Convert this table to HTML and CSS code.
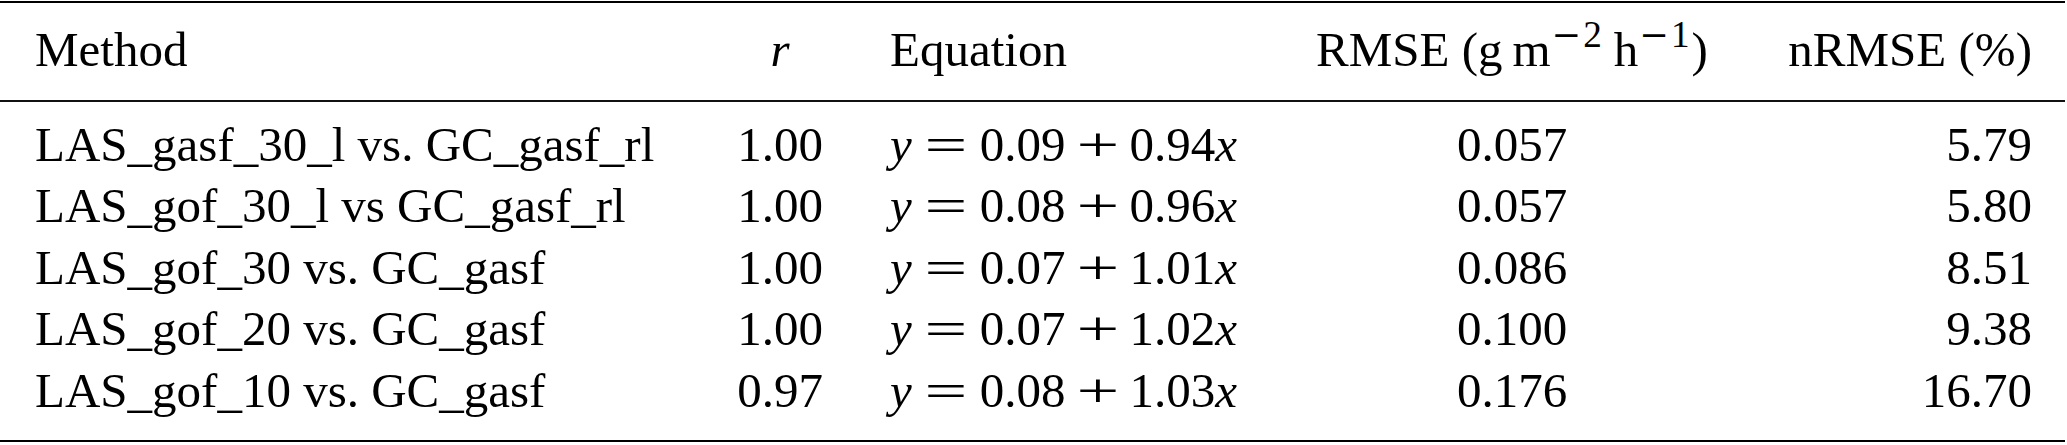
FILE: index.html
```html
<!DOCTYPE html>
<html lang="en">
<head>
<meta charset="utf-8">
<title>Method comparison</title>
<link rel="stylesheet" href="styles.css">
</head>
<body>
<table class="results">
  <colgroup>
    <col class="c-method">
    <col class="c-r">
    <col class="c-eq">
    <col class="c-rmse">
    <col class="c-nrmse">
  </colgroup>
  <thead>
    <tr>
      <th class="method">Method</th>
      <th class="r"><i>r</i></th>
      <th class="eq">Equation</th>
      <th class="rmse">RMSE (g&#8201;m<sup><span class="mn">−</span>2</sup>&#8201;h<sup><span class="mn">−</span>1</sup>)</th>
      <th class="nrmse">nRMSE (%)</th>
    </tr>
  </thead>
  <tbody>
    <tr>
      <td class="method">LAS_gasf_30_l vs. GC_gasf_rl</td>
      <td class="r">1.00</td>
      <td class="eq"><i>y</i><span class="op rel">=</span>0.09<span class="op bin">+</span>0.94<i>x</i></td>
      <td class="rmse">0.057</td>
      <td class="nrmse">5.79</td>
    </tr>
    <tr>
      <td class="method">LAS_gof_30_l vs GC_gasf_rl</td>
      <td class="r">1.00</td>
      <td class="eq"><i>y</i><span class="op rel">=</span>0.08<span class="op bin">+</span>0.96<i>x</i></td>
      <td class="rmse">0.057</td>
      <td class="nrmse">5.80</td>
    </tr>
    <tr>
      <td class="method">LAS_gof_30 vs. GC_gasf</td>
      <td class="r">1.00</td>
      <td class="eq"><i>y</i><span class="op rel">=</span>0.07<span class="op bin">+</span>1.01<i>x</i></td>
      <td class="rmse">0.086</td>
      <td class="nrmse">8.51</td>
    </tr>
    <tr>
      <td class="method">LAS_gof_20 vs. GC_gasf</td>
      <td class="r">1.00</td>
      <td class="eq"><i>y</i><span class="op rel">=</span>0.07<span class="op bin">+</span>1.02<i>x</i></td>
      <td class="rmse">0.100</td>
      <td class="nrmse">9.38</td>
    </tr>
    <tr>
      <td class="method">LAS_gof_10 vs. GC_gasf</td>
      <td class="r">0.97</td>
      <td class="eq"><i>y</i><span class="op rel">=</span>0.08<span class="op bin">+</span>1.03<i>x</i></td>
      <td class="rmse">0.176</td>
      <td class="nrmse">16.70</td>
    </tr>
  </tbody>
</table>
</body>
</html>
```

FILE: styles.css
```css
html, body {
  margin: 0;
  padding: 0;
  background: #ffffff;
}

.results {
  margin-top: 1px;
  width: 2065px;
  table-layout: fixed;
  border-collapse: separate;
  border-spacing: 0;
  font-family: "Liberation Serif", "Times New Roman", serif;
  font-size: 49px;
  color: #000;
}

.c-method { width: 720px; }
.c-r { width: 120px; }
.c-eq { width: 440px; }
.c-rmse { width: 464px; }
.c-nrmse { width: 321px; }

.results th,
.results td {
  padding: 0;
  line-height: 61.5px;
  font-weight: normal;
  white-space: nowrap;
  vertical-align: baseline;
}

.results thead th {
  border-top: 2px solid #000;
  border-bottom: 2px solid #111;
  padding-top: 16px;
  padding-bottom: 19px;
}

.results tbody tr:first-child td {
  padding-top: 12px;
}

.results tbody tr:last-child td {
  padding-bottom: 19px;
  border-bottom: 2px solid #000;
}

.method { text-align: left; padding-left: 35px !important; }
.r { text-align: center; }
.eq { text-align: left; padding-left: 50px !important; }
.rmse { text-align: center; }
.nrmse { text-align: right; padding-right: 33px !important; }

.results sup {
  font-size: 0.76em;
  line-height: 0;
  vertical-align: 0.5em;
  margin-left: 1px;
  margin-right: 2px;
}

.mn {
  font-family: "DejaVu Serif", serif;
  font-size: 0.95em;
  margin-right: 0.06em;
}

.op {
  display: inline-block;
  font-family: "Liberation Serif", serif;
  font-size: 49px;
  line-height: 1;
  width: 40px;
  text-align: center;
  transform: scaleX(1.55);
}

.op.rel { margin: 0 14px; }
.op.bin { margin: 0 12px; }
```
